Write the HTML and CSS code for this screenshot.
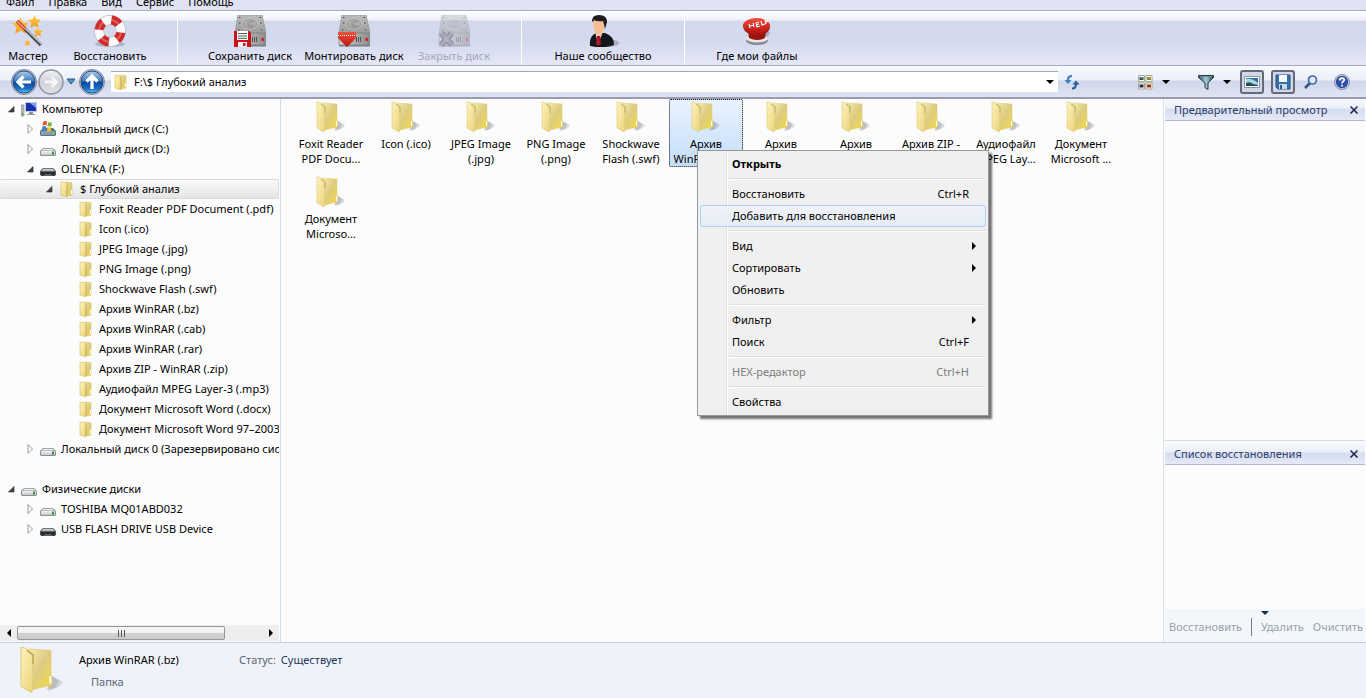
FILE: index.html
```
<!DOCTYPE html>
<html lang="ru">
<head>
<meta charset="utf-8">
<title>F:\$ Глубокий анализ</title>
<meta name="viewport" content="width=device-width, initial-scale=1">
<link rel="stylesheet" href="styles.css">
</head>
<body>
<svg class="sprite" aria-hidden="true">
  <defs>
    <linearGradient id="gFront" x1="0" y1="0" x2="1" y2="1"><stop offset="0" stop-color="#fdf4bd"/><stop offset="1" stop-color="#ead27a"/></linearGradient>
    <linearGradient id="gBack" x1="0" y1="0" x2="1" y2="1"><stop offset="0" stop-color="#f8edb0"/><stop offset=".5" stop-color="#dccb80"/><stop offset="1" stop-color="#f4da42"/></linearGradient>
    <linearGradient id="gBlue" x1="0" y1="0" x2="0" y2="1"><stop offset="0" stop-color="#b4cde8"/><stop offset=".45" stop-color="#3f7cc0"/><stop offset=".5" stop-color="#0c4a9a"/><stop offset=".8" stop-color="#1a6cc4"/><stop offset="1" stop-color="#5fd0f8"/></linearGradient>
    <linearGradient id="gGray" x1="0" y1="0" x2="0" y2="1"><stop offset="0" stop-color="#f2f2f5"/><stop offset=".5" stop-color="#cfd0d8"/><stop offset="1" stop-color="#e2e3ea"/></linearGradient>
    <linearGradient id="gMetal" x1="0" y1="0" x2="0" y2="1"><stop offset="0" stop-color="#bcbcbc"/><stop offset="1" stop-color="#9c9c9c"/></linearGradient>
    <linearGradient id="gFace" x1="0" y1="0" x2="1" y2="0"><stop offset="0" stop-color="#d0d0d0"/><stop offset="1" stop-color="#8c8c8c"/></linearGradient>
    <linearGradient id="gStar" x1="0" y1="0" x2="0" y2="1"><stop offset="0" stop-color="#ffd257"/><stop offset="1" stop-color="#f59a1c"/></linearGradient>
    <linearGradient id="gRed" x1="0" y1="0" x2="0" y2="1"><stop offset="0" stop-color="#f0503a"/><stop offset="1" stop-color="#b81414"/></linearGradient>
    <linearGradient id="gDrive" x1="0" y1="0" x2="0" y2="1"><stop offset="0" stop-color="#f4f4f4"/><stop offset="1" stop-color="#c3c6c9"/></linearGradient>
    <linearGradient id="gFunnel" x1="0" y1="0" x2="1" y2="0"><stop offset="0" stop-color="#2e4654"/><stop offset=".5" stop-color="#a9cdd4"/><stop offset="1" stop-color="#1e4550"/></linearGradient>
  </defs>
  <symbol id="folder" viewBox="0 0 32 32">
    <path d="M20 30q8-2 10-6l-7-4z" fill="#8b8f99" opacity=".3"/><path d="M19 29l6-1 2-5-4-3z" fill="#8b8f99" opacity=".35"/>
    <path d="M7 2l15 1v23l-12 3z" fill="url(#gBack)" stroke="#dccb80" stroke-width=".5"/>
    <path d="M2 1h2l6 4v24l-1 2-7-4z" fill="url(#gFront)" stroke="#dcc670" stroke-width=".6"/>
    <path d="M6 3l4 3v6" fill="none" stroke="#ab984b" stroke-width=".7"/>
    <path d="M20 21l2-2 1 1v6l-3 2z" fill="#e8cf62"/><path d="M21.500 20v5" stroke="#fff" stroke-width="1.200"/>
  </symbol>
  <symbol id="folder-s" viewBox="0 0 16 16">
    <path d="M7 1l6 1v12l-6 1z" fill="url(#gBack)" stroke="#d8be5c" stroke-width=".6"/>
    <path d="M2 1l6 1v14l-6-2z" fill="url(#gFront)" stroke="#d8be5c" stroke-width=".6"/>
    <path d="M8 3v12" stroke="#c0a650" stroke-width=".7"/><path d="M12.500 9v4" stroke="#fff"/>
  </symbol>
  <symbol id="drive" viewBox="0 0 16 16">
    <path d="M0 10l3-3h10l3 3v4l-1 1H1l-1-1z" fill="#8b8f93"/>
    <path d="M1.500 9.500l2-1.700h9l2 1.700z" fill="#eceded"/><path d="M1 10h14v3.500l-.5.500h-13l-.5-.500z" fill="url(#gDrive)"/><path d="M12 10.500h2v3h-2z" fill="#3f8f42"/>
  </symbol>
  <symbol id="usb" viewBox="0 0 16 16">
    <path d="M0 10l3-3h10l3 3v3.500L15 15H1l-1-1.500z" fill="#5b5f64"/><path d="M1.500 9.500l2-1.700h9l2 1.700-1 .500h-11z" fill="#c0c2c7"/><path d="M.8 11h14.400v2.500l-1 1h-2L11 13H5l-1.200 1.500h-2l-1-1z" fill="#2a2d31"/>
  </symbol>
  <symbol id="windrive" viewBox="0 0 16 16">
    <path d="M0 10l3-3h10l3 3v4l-1 1H1l-1-1z" fill="#5a7380"/><path d="M1 10h14v4H1z" fill="#7fa0ac"/><path d="M12 11h2v2h-2z" fill="#63d04e"/>
    <path d="M3 1q2-2 4-.5L6.500 4.500Q4.500 3.500 2.500 4.500z" fill="#e4572e"/><path d="M8 1q2 1 4 0l-.500 4q-2 1-4 0z" fill="#7ab735"/><path d="M2.300 5.500q2-1 4 0L6 9.500q-2-1-4 0z" fill="#3f86d0"/><path d="M7.400 6q2 1 4 0L11 10q-2 1-4 0z" fill="#f4bf2c"/>
  </symbol>
  <symbol id="computer" viewBox="0 0 16 16">
    <path d="M0 4h3v11H0z" fill="#b9bdc0" stroke="#777" stroke-width=".5"/><path d="M1 12h1v2H1z" fill="#42b32e"/>
    <path d="M4 1h12v10H4z" fill="#c2cbe0"/><path d="M5 2h10v8H5z" fill="#1732b0"/><path d="M9 2h6v5z" fill="#7fa2f2"/><path d="M8 11h4v2h2v1H6v-1h2z" fill="#8d9199"/>
  </symbol>
  <symbol id="open" viewBox="0 0 10 10"><path d="M7 2.500v5.500H1.500z" fill="#444" stroke="#222" stroke-width=".6"/></symbol>
  <symbol id="closed" viewBox="0 0 10 10"><path d="M2 .5v9L6.500 5z" fill="#fff" stroke="#999"/></symbol>
  <symbol id="down" viewBox="0 0 8 8"><path d="M0 2h8L4 6z"/></symbol>
  <symbol id="right" viewBox="0 0 8 8"><path d="M2 0v8l4-4z"/></symbol>
  <symbol id="left" viewBox="0 0 8 8"><path d="M6 0v8L2 4z"/></symbol>
  <symbol id="close" viewBox="0 0 10 10"><path d="M1.500 1.500l7 7m0-7l-7 7" stroke="#1c2b52" stroke-width="1.600"/></symbol>
  <symbol id="star" viewBox="0 0 10 10"><path d="M5 0l1.500 3.300 3.500.400-2.600 2.400.700 3.700L5 8 1.900 9.800l.700-3.700L0 3.700l3.500-.400z" fill="url(#gStar)"/></symbol>
  <symbol id="wizard" viewBox="0 0 32 32">
    <use href="#star" x="0" y="2" width="17" height="17"/><use href="#star" x="16" y="0" width="13" height="13"/><use href="#star" x="21" y="12" width="10" height="10"/><use href="#star" x="12" y="24" width="7" height="7"/>
    <path d="M5 6l8 8" stroke="#b83a24" stroke-width="3.600"/><path d="M5 6l8 8" stroke="#f8a488" stroke-width="1.500"/>
    <path d="M13 14l16 16" stroke="#4a4a50" stroke-width="3.600"/><path d="M13.500 13.500l16 15.500" stroke="#cfd1d8" stroke-width="1.400"/>
  </symbol>
  <symbol id="lifebuoy" viewBox="0 0 32 32">
    <ellipse cx="16" cy="29" rx="15" ry="3" fill="#8189a4" opacity=".5"/>
    <circle cx="16" cy="16" r="11" fill="none" stroke="#b9bcc4" stroke-width="10"/><circle cx="16" cy="16" r="11" fill="none" stroke="#fafafa" stroke-width="8.500"/>
    <circle cx="16" cy="16" r="11" fill="none" stroke="#cf2a28" stroke-width="9" stroke-dasharray="8.640 8.640" stroke-dashoffset="4.320" transform="rotate(28 16 16)"/>
    <circle cx="16" cy="16" r="11" fill="none" stroke="#fff" stroke-width="2" opacity=".25"/>
  </symbol>
  <symbol id="hdd" viewBox="0 0 32 32">
    <path d="M4 0h24l4 18H1z" fill="url(#gMetal)" stroke="#929292" stroke-width=".7"/>
    <ellipse cx="16" cy="9" rx="8" ry="5" fill="none" stroke="#d0d0d0"/><ellipse cx="16" cy="9" rx="7" ry="4.300" fill="none" stroke="#909090"/><path d="M19 7q-5-1-5 2t5 2" fill="none" stroke="#858585"/>
    <path d="M5 2.500h1.500M25.500 2.500H27M4 15h1.500M27 15h1.500M5 8h1.500M26 8h1.500" stroke="#444"/>
    <path d="M1 18h31v12H1z" fill="url(#gFace)" stroke="#808080" stroke-width=".7"/><path d="M18.500 22v5m2-5v5m2-5v5" stroke="#555"/><path d="M1 30h31v1.500H1z" fill="#7c7e84"/><path d="M27.500 23h2.500v3h-2.500z" fill="#d3202c"/>
  </symbol>
  <symbol id="savedisk" viewBox="0 0 32 32">
    <use href="#hdd"/><path d="M0 16h15l2 2v14H0z" fill="#c91518"/><path d="M3 16h11v9H3z" fill="#fff"/><path d="M4 18.500h9M4 21h9M4 23.300h9" stroke="#3d5a50"/><path d="M4 27h9v5H4z" fill="#eee"/><path d="M9 28h2.500v3H9z" fill="#c91518"/>
  </symbol>
  <symbol id="mount" viewBox="0 0 32 32"><use href="#hdd"/><path d="M0 17h18v5h1L9 32-1 22h1z" fill="url(#gRed)"/><path d="M0 20.500h18" stroke="#fff" stroke-dasharray="1 1"/></symbol>
  <symbol id="closedisk" viewBox="0 0 32 32"><use href="#hdd"/><path d="M3 18l11 12m0-12L3 30" stroke="#3e4048" stroke-width="6"/><path d="M3 18l11 12m0-12L3 30" stroke="#a4a6ac" stroke-width="3.500" stroke-dasharray="1 1"/></symbol>
  <symbol id="person" viewBox="0 0 32 32">
    <ellipse cx="20" cy="28" rx="12" ry="4" fill="#777d94" opacity=".5"/>
    <path d="M3 31q-1-10 6-13h9q9 3 9 12-11 4-24 1z" fill="#14161c"/><path d="M8 17l3 12 5-12z" fill="#f0c8b0"/><path d="M10 21l3 0 1 8-3 2-2-2z" fill="#a81922"/>
    <path d="M6 7q0-5 6-5t6 6l-1 6q-2 5-6 5-3-1-4-5z" fill="#f7bd92"/><path d="M5 6Q5 0 12 0q8 0 8 7l-2 7q-1-5-2-8-6 1-9-1l-1 2z" fill="#1d1c1e"/>
  </symbol>
  <symbol id="helpbtn" viewBox="0 0 32 32">
    <path d="M9 27q14 3 20-9l-4-4z" fill="#646c80" opacity=".4"/><ellipse cx="16" cy="25.500" rx="11" ry="4.500" fill="#83878e"/><ellipse cx="16" cy="23.500" rx="11" ry="4" fill="#e6e7ea"/>
    <path d="M7 17l1 6q8 4 16 0l1-6z" fill="#9c1510"/><path d="M2 9v3q2 8 14 8t13-8V9z" fill="#a81a14"/><ellipse cx="15.500" cy="10.500" rx="13.500" ry="7.500" fill="url(#gRed)"/>
    <path d="M8 9l1 4m3-5l1 4m-4-1l4-1m5-3l-3 1 1 4 3-1m-4-1l3-1m2-3l1 4 3-1m1 0l-1-4 2-1 1 2-2 1" fill="none" stroke="#fff" stroke-width="1.100"/>
  </symbol>
  <symbol id="back" viewBox="0 0 26 26"><circle cx="13" cy="13" r="12.500" fill="#c7cad4" stroke="#7d879c"/><circle cx="13" cy="13" r="11" fill="url(#gBlue)" stroke="#1c4a86"/><path d="M12.500 7.500L7 13l5.500 5.500M8 13h12" fill="none" stroke="#fff" stroke-width="3.200"/></symbol>
  <symbol id="forward" viewBox="0 0 26 26"><circle cx="13" cy="13" r="12" fill="url(#gGray)" stroke="#92959f" stroke-width="1.500"/><path d="M13.500 8l5 5-5 5m4-5H7" fill="none" stroke="#f5f5f8" stroke-width="3"/></symbol>
  <symbol id="up" viewBox="0 0 26 26"><circle cx="13" cy="13" r="12.500" fill="#c7cad4" stroke="#7d879c"/><circle cx="13" cy="13" r="11" fill="url(#gBlue)" stroke="#1c4a86"/><path d="M7.500 12.500L13 7l5.500 5.500M13 8v12" fill="none" stroke="#fff" stroke-width="3.200"/></symbol>
  <symbol id="history" viewBox="0 0 10 8"><path d="M1 1h8L5 6z" fill="#4b9aca" stroke="#27557c"/></symbol>
  <symbol id="refresh" viewBox="0 0 16 16"><path d="M8 2q-4 0-4 4" fill="none" stroke="#3b80c4" stroke-width="2.200"/><path d="M.5 6h7L4 10z" fill="#3b80c4"/><path d="M8 14.500q4 0 4-4.500" fill="none" stroke="#27609f" stroke-width="2.200"/><path d="M8.500 10.500h7L12 6.500z" fill="#27609f"/></symbol>
  <symbol id="view" viewBox="0 0 16 16"><path d="M1.500 1.500h6v6h-6zM9 1.500h6v6H9zM1.500 9h6v6h-6zM9 9h6v6H9z" fill="#fff" stroke="#a8a68c"/><path d="M2.500 3h4v3h-4z" fill="#245a63"/><path d="M10 3h4v3h-4z" fill="#76922f"/><path d="M2.500 10.500h4v3h-4z" fill="#262b48"/><path d="M10 10.500h4v3h-4z" fill="#a03018"/><path d="M4 3h2v1H4zM12 3h2v2h-2z" fill="#c68a4c"/></symbol>
  <symbol id="filter" viewBox="0 0 16 16"><path d="M.5 1.500h15v2L10 9v6.500l-3-2V9L.5 3.500z" fill="url(#gFunnel)" stroke="#243c4a"/><path d="M2 2.500h12" stroke="#6f939d"/></symbol>
  <symbol id="image" viewBox="0 0 16 16"><path d="M.5 2.500h15v11H.5z" fill="#fff" stroke="#8994a3"/><path d="M2 4h12v8H2z" fill="#366f9f"/><path d="M2 5q6-1 12 4v3H2z" fill="#a8d8e4"/><path d="M2 9q4-2 7 1l5 1v1H2z" fill="#234f50"/></symbol>
  <symbol id="floppy" viewBox="0 0 16 16"><path d="M1 1h14v14H3l-2-2z" fill="#3471ae" stroke="#205184"/><path d="M4 1h8v7H4z" fill="#f3f8fc"/><path d="M4 10h8v5H4z" fill="#c8d7e4"/><path d="M5 11h2v4H5z" fill="#2a5a8c"/></symbol>
  <symbol id="search" viewBox="0 0 16 16"><path d="M7 9l-5 5" stroke="#2f5684" stroke-width="2.500"/><circle cx="9.500" cy="6" r="4" fill="#ddebf7" stroke="#416ba0" stroke-width="1.700"/></symbol>
  <symbol id="help" viewBox="0 0 16 16"><circle cx="8" cy="8" r="7.500" fill="#d2d5df" stroke="#8990a8"/><circle cx="8" cy="8" r="6.200" fill="#2b4fa6"/><path d="M3 6q5-5 10 0-5 2-10 0" fill="#5f7ac2"/><path d="M5.800 6.300q0-2.300 2.200-2.300t2.200 2q0 1-1.200 1.700T8 9.500" fill="none" stroke="#fff" stroke-width="1.600"/><path d="M7.200 10.700h1.700v1.700H7.200z" fill="#fff"/></symbol>
</svg>

<div class="app">
  <nav class="menubar">
    <button>Файл</button><button>Правка</button><button>Вид</button><button>Сервис</button><button>Помощь</button>
  </nav>

  <div class="toolbar">
    <div class="group">
      <button class="tool narrow"><svg><use href="#wizard"/></svg>Мастер</button>
      <button class="tool"><svg><use href="#lifebuoy"/></svg>Восстановить</button>
    </div>
    <div class="group disks">
      <button class="tool"><svg><use href="#savedisk"/></svg>Сохранить диск</button>
      <button class="tool"><svg><use href="#mount"/></svg>Монтировать диск</button>
      <button class="tool" disabled><svg><use href="#closedisk"/></svg>Закрыть диск</button>
    </div>
    <div class="group single"><button class="tool"><svg><use href="#person"/></svg>Наше сообщество</button></div>
    <div class="group single last"><button class="tool"><svg><use href="#helpbtn"/></svg>Где мои файлы</button></div>
  </div>

  <div class="navbar">
    <div class="travel">
      <button aria-label="Назад"><svg class="round"><use href="#back"/></svg></button>
      <button aria-label="Вперёд"><svg class="round"><use href="#forward"/></svg></button>
      <button aria-label="История"><svg class="hist"><use href="#history"/></svg></button>
      <button aria-label="Вверх"><svg class="round"><use href="#up"/></svg></button>
    </div>
    <div class="address">
      <svg class="i16"><use href="#folder-s"/></svg>
      <input type="text" aria-label="Адрес" value="F:\$ Глубокий анализ">
      <button aria-label="Список адресов"><svg class="i8"><use href="#down"/></svg></button>
    </div>
    <div class="actions">
      <button class="refresh" aria-label="Обновить"><svg class="i16"><use href="#refresh"/></svg></button>
      <button class="combo" aria-label="Вид"><svg class="i16"><use href="#view"/></svg><svg class="i8"><use href="#down"/></svg></button>
      <button class="combo" aria-label="Фильтр"><svg class="i16"><use href="#filter"/></svg><svg class="i8"><use href="#down"/></svg></button>
      <button class="pressed" aria-pressed="true" aria-label="Предварительный просмотр"><svg class="i16"><use href="#image"/></svg></button>
      <button class="pressed" aria-pressed="true" aria-label="Список восстановления"><svg class="i16"><use href="#floppy"/></svg></button>
      <button class="plain" aria-label="Поиск"><svg class="i16"><use href="#search"/></svg></button>
      <button class="plain" aria-label="Справка"><svg class="i16"><use href="#help"/></svg></button>
    </div>
  </div>

  <main class="body">
    <aside class="side">
      <ul class="tree">
        <li><svg class="tw"><use href="#open"/></svg><svg class="i16"><use href="#computer"/></svg>Компьютер</li>
        <li class="l1"><svg class="tw"><use href="#closed"/></svg><svg class="i16"><use href="#windrive"/></svg>Локальный диск (C:)</li>
        <li class="l1"><svg class="tw"><use href="#closed"/></svg><svg class="i16"><use href="#drive"/></svg>Локальный диск (D:)</li>
        <li class="l1"><svg class="tw"><use href="#open"/></svg><svg class="i16"><use href="#usb"/></svg>OLEN'KA (F:)</li>
        <li class="l2 current"><svg class="tw"><use href="#open"/></svg><svg class="i16"><use href="#folder-s"/></svg>$ Глубокий анализ</li>
        <li class="l3"><svg class="i16"><use href="#folder-s"/></svg>Foxit Reader PDF Document (.pdf)</li>
        <li class="l3"><svg class="i16"><use href="#folder-s"/></svg>Icon (.ico)</li>
        <li class="l3"><svg class="i16"><use href="#folder-s"/></svg>JPEG Image (.jpg)</li>
        <li class="l3"><svg class="i16"><use href="#folder-s"/></svg>PNG Image (.png)</li>
        <li class="l3"><svg class="i16"><use href="#folder-s"/></svg>Shockwave Flash (.swf)</li>
        <li class="l3"><svg class="i16"><use href="#folder-s"/></svg>Архив WinRAR (.bz)</li>
        <li class="l3"><svg class="i16"><use href="#folder-s"/></svg>Архив WinRAR (.cab)</li>
        <li class="l3"><svg class="i16"><use href="#folder-s"/></svg>Архив WinRAR (.rar)</li>
        <li class="l3"><svg class="i16"><use href="#folder-s"/></svg>Архив ZIP - WinRAR (.zip)</li>
        <li class="l3"><svg class="i16"><use href="#folder-s"/></svg>Аудиофайл MPEG Layer-3 (.mp3)</li>
        <li class="l3"><svg class="i16"><use href="#folder-s"/></svg>Документ Microsoft Word (.docx)</li>
        <li class="l3"><svg class="i16"><use href="#folder-s"/></svg>Документ Microsoft Word 97–2003 (.doc)</li>
        <li class="l1"><svg class="tw"><use href="#closed"/></svg><svg class="i16"><use href="#drive"/></svg>Локальный диск 0 (Зарезервировано системой)</li>
        <li class="section"><svg class="tw"><use href="#open"/></svg><svg class="i16"><use href="#drive"/></svg>Физические диски</li>
        <li class="l1"><svg class="tw"><use href="#closed"/></svg><svg class="i16"><use href="#drive"/></svg>TOSHIBA MQ01ABD032</li>
        <li class="l1"><svg class="tw"><use href="#closed"/></svg><svg class="i16"><use href="#usb"/></svg>USB FLASH DRIVE USB Device</li>
      </ul>
      <div class="hscroll">
        <button aria-label="Влево"><svg class="i8"><use href="#left"/></svg></button>
        <div class="track"><div class="thumb"><i></i><i></i><i></i></div></div>
        <button aria-label="Вправо"><svg class="i8"><use href="#right"/></svg></button>
      </div>
    </aside>

    <ul class="files">
      <li><svg><use href="#folder"/></svg>Foxit Reader<br>PDF Docu...</li>
      <li><svg><use href="#folder"/></svg>Icon (.ico)</li>
      <li><svg><use href="#folder"/></svg>JPEG Image<br>(.jpg)</li>
      <li><svg><use href="#folder"/></svg>PNG Image<br>(.png)</li>
      <li><svg><use href="#folder"/></svg>Shockwave<br>Flash (.swf)</li>
      <li class="selected"><svg><use href="#folder"/></svg>Архив<br>WinRAR (.bz)</li>
      <li><svg><use href="#folder"/></svg>Архив<br>WinRAR...</li>
      <li><svg><use href="#folder"/></svg>Архив<br>WinRAR...</li>
      <li><svg><use href="#folder"/></svg>Архив ZIP -<br>WinRAR...</li>
      <li><svg><use href="#folder"/></svg>Аудиофайл<br>MPEG Lay...</li>
      <li><svg><use href="#folder"/></svg>Документ<br>Microsoft ...</li>
      <li><svg><use href="#folder"/></svg>Документ<br>Microso...</li>
    </ul>

    <aside class="panels">
      <section class="panel">
        <header><h2>Предварительный просмотр</h2><button aria-label="Закрыть"><svg><use href="#close"/></svg></button></header>
      </section>
      <section class="panel recovery">
        <header><h2>Список восстановления</h2><button aria-label="Закрыть"><svg><use href="#close"/></svg></button></header>
        <div class="list"></div>
        <footer>
          <svg class="i8"><use href="#down"/></svg>
          <div class="row"><button disabled>Восстановить</button><span class="bar"></span><button disabled>Удалить</button><button disabled>Очистить</button></div>
        </footer>
      </section>
    </aside>
  </main>

  <footer class="details">
    <svg><use href="#folder"/></svg>
    <div class="what"><strong>Архив WinRAR (.bz)</strong><span>Папка</span></div>
    <div class="status">Статус: <b>Существует</b></div>
  </footer>
</div>

<div class="context" role="menu">
  <button role="menuitem" class="default">Открыть</button>
  <hr>
  <button role="menuitem">Восстановить<kbd>Ctrl+R</kbd></button>
  <button role="menuitem" class="hover">Добавить для восстановления</button>
  <hr>
  <button role="menuitem">Вид<svg class="i8"><use href="#right"/></svg></button>
  <button role="menuitem">Сортировать<svg class="i8"><use href="#right"/></svg></button>
  <button role="menuitem">Обновить</button>
  <hr>
  <button role="menuitem">Фильтр<svg class="i8"><use href="#right"/></svg></button>
  <button role="menuitem">Поиск<kbd>Ctrl+F</kbd></button>
  <hr>
  <button role="menuitem" disabled>HEX-редактор<kbd>Ctrl+H</kbd></button>
  <hr>
  <button role="menuitem">Свойства</button>
</div>
</body>
</html>
```
FILE: styles.css
```
* { box-sizing: border-box; }
body { margin: 0; font: 11px/16px "Noto Sans", "Open Sans", sans-serif; color: #000; background: #fcfcfc; }
button, input, kbd { font: inherit; color: inherit; }
button { border: 0; padding: 0; background: none; white-space: nowrap; }
ul { list-style: none; margin: 0; padding: 0; }
svg { flex: none; display: block; }
.sprite { position: absolute; width: 0; height: 0; }
.i16 { width: 16px; height: 16px; }
.i8 { width: 8px; height: 8px; }

.app { display: flex; flex-direction: column; height: 100vh; overflow: hidden; }

.menubar { flex: none; display: flex; align-items: flex-end; gap: 14px; height: 11px; padding-left: 6px; overflow: hidden; background: #dfe3f3; border-bottom: 1px solid #a9adba; }
.menubar button { flex: none; height: 16px; }

.toolbar { flex: none; display: flex; height: 55px; background: linear-gradient(#fff 0, #eff1fa 9px, #d3d9ed 10px, #d5daee 32px, #e4e7f7 54px); border-bottom: 1px solid #a9adba; }
.group { display: flex; width: 178px; border-right: 1px solid #fff; }
.disks { width: 344px; padding-left: 20px; }
.single { width: 163px; justify-content: center; }
.last { width: 144px; border: 0; }
.tool { width: 104px; display: flex; flex-direction: column; align-items: center; gap: 1px; padding-top: 4px; }
.tool svg { width: 32px; height: 32px; }
.narrow { width: 56px; }
.narrow + .tool { width: 108px; }
.tool:disabled { width: 96px; color: #a3a7b5; }
.tool:disabled svg { opacity: .45; }

.navbar { flex: none; display: flex; align-items: center; height: 33px; padding-left: 11px; background: linear-gradient(#f8f9fd 0, #eceffa 14px, #d0d7e9 15px, #dfe4f4 100%); border-bottom: 2px solid #9a9cae; }
.travel { display: flex; align-items: center; gap: 1px; margin-right: 6px; }
.travel button { display: flex; justify-content: center; }
.round { width: 26px; height: 26px; }
.hist { width: 10px; height: 8px; margin: 0 2px 0 1px; }
.address { flex: 1; display: flex; align-items: center; height: 21px; padding-left: 2px; background: #fff; border-top: 1px solid #a6a9b4; }
.address input { flex: 1; min-width: 0; border: 0; padding: 0 5px; background: none; outline: 0; color: #000; }
.address button { display: flex; width: 16px; justify-content: center; }
.actions { display: flex; align-items: center; padding-right: 16px; }
.actions button { display: flex; align-items: center; justify-content: center; }
.refresh { width: 28px; }
.combo { gap: 9px; margin-left: 28px; width: 33px; }
.refresh + .combo { margin-left: 51px; }
.actions .pressed { width: 24px; height: 24px; margin-left: 7px; border: 2px solid #66697a; border-radius: 3px; background: #d2d7e6; }
.combo + .pressed { margin-left: 9px; }
.plain { width: 16px; margin-left: 8px; }
.plain + .plain { margin-left: 15px; }

.body { flex: 1; min-height: 0; display: flex; }
.side { flex: none; display: flex; flex-direction: column; width: 281px; padding: 0 1px 1px 0; border-right: 1px solid #d0dce8; }
.tree { flex: 1; min-height: 0; overflow: hidden; }
.tree li { display: flex; align-items: center; height: 20px; padding-left: 7px; white-space: nowrap; overflow: hidden; }
.tree .i16 { margin: 0 5px 0 4px; }
.tw { width: 10px; height: 10px; }
.tree .l1 { padding-left: 26px; }
.tree .l2 { padding-left: 45px; }
.tree .l3 { padding-left: 74px; }
.tree .section { margin-top: 20px; }
.tree .current { border: 1px solid #d9d9d9; border-left: 0; background: linear-gradient(#fafafa, #e5e5e5); border-radius: 2px; }
.hscroll { flex: none; display: flex; height: 16px; background: #eee; }
.hscroll button { display: flex; align-items: center; justify-content: center; width: 17px; }
.track { flex: 1; padding: 1px 0; }
.thumb { display: flex; align-items: center; justify-content: center; gap: 2px; width: 85%; height: 14px; border: 1px solid #969696; border-radius: 2px; background: linear-gradient(#f4f4f4 45%, #d4d4d6 50%, #cacacc); }
.thumb i { width: 1px; height: 7px; background: #555; }

.files { flex: 1; min-width: 0; display: flex; flex-wrap: wrap; align-content: flex-start; gap: 7px 1px; padding-left: 13px; }
.files li { width: 74px; height: 68px; padding-top: 2px; line-height: 15px; text-align: center; white-space: nowrap; }
.files svg { width: 32px; height: 32px; margin: 0 auto 3px; }
.files .selected { border: 1px dotted #111; padding-top: 1px; border-radius: 2px; overflow: hidden; background: linear-gradient(#eaf3fe, #c4ddfa); }

.panels { flex: none; display: flex; flex-direction: column; width: 203px; padding: 0 1px; border-left: 1px solid #d8e2ec; }
.panel { flex: 1; display: flex; flex-direction: column; border-bottom: 1px solid #cdd9e6; }
.recovery { flex: none; height: 201px; border: 0; padding-top: 2px; }
.panel header { flex: none; display: flex; align-items: center; justify-content: space-between; height: 22px; padding: 0 6px 0 9px; background: linear-gradient(#f8f9fd 0, #eceffa 9px, #d5dcef 10px, #e5e9f7 100%); border-bottom: 1px solid #b4bacc; }
.panel h2 { margin: 0; font-size: 11px; font-weight: 400; color: #2c4068; white-space: nowrap; }
.panel header svg { width: 10px; height: 10px; }
.list { flex: 1; }
.panel footer { height: 33px; background: #f3f7fb; }
.panel footer > svg { margin: 0 auto; fill: #1c2b52; }
.row { display: flex; align-items: center; justify-content: space-between; height: 20px; padding: 0 2px 0 4px; }
.row button:disabled { color: #9ba1a9; }
.bar { width: 1px; height: 18px; background: #777c85; }

.details { flex: none; display: flex; height: 56px; padding: 3px 0 0 18px; border-top: 1px solid #c3cedb; background: #eff3f9; }
.details > svg { width: 48px; height: 48px; }
.what { width: 160px; margin-left: 13px; padding-top: 6px; display: flex; flex-direction: column; gap: 6px; color: #5a6378; }
.what strong { font-weight: 400; color: #000; }
.what span { padding-left: 12px; }
.status { padding-top: 6px; color: #5a6378; }
.status b { font-weight: 400; color: #1e395b; margin-left: 2px; }

.context { position: absolute; left: 697px; top: 150px; width: 292px; padding: 2px; border: 1px solid #979797; background: linear-gradient(90deg, #f0f0f0 28px, #dedede 28px, #dedede 29px, #fff 29px, #fff 30px, #f0f0f0 30px); box-shadow: 3px 3px 2px rgba(0, 0, 0, .55); }
.context button { display: flex; align-items: center; width: 100%; height: 22px; padding: 0 7px 0 31px; border: 1px solid transparent; text-align: left; }
.context .default { font-weight: 700; }
.context .hover { border-color: #aecff7; border-radius: 3px; background: linear-gradient(rgba(240, 244, 251, .7), rgba(225, 234, 248, .7)); }
.context button:disabled { color: #7d7d7d; }
.context kbd { margin-left: auto; padding-right: 9px; }
.context svg { margin-left: auto; }
.context hr { height: 2px; margin: 3px 0 3px 29px; border: 0; border-top: 1px solid #e0e0e0; border-bottom: 1px solid #fff; }
```
